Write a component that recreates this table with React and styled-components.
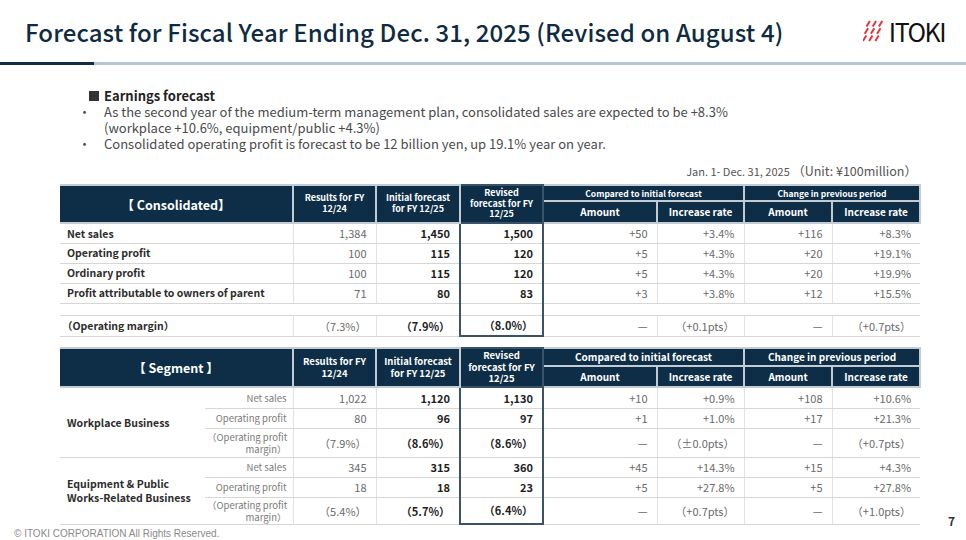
import React from 'react';
import styled, { createGlobalStyle, css } from 'styled-components';

const NAVY = '#0d2e46';
const BOX = '#3a5368';

const GlobalStyle = createGlobalStyle`
  body {
    margin: 0;
    background: #fff;
    font-family: "Noto Sans CJK JP", "Noto Sans", sans-serif;
  }
`;

const Slide = styled.div`
  width: 966px;
  height: 540px;
  overflow: hidden;
  display: flex;
  flex-direction: column;
  background: #fff;
`;

const Header = styled.header`
  height: 63px;
  box-sizing: border-box;
  display: flex;
  align-items: center;
  justify-content: space-between;
  padding: 0 21px 0 25px;
`;

const Title = styled.h1`
  margin: 0;
  font-size: 24px;
  font-weight: 500;
  color: #0f2b42;
  white-space: nowrap;
  letter-spacing: 0.1px;
`;

const Logo = styled.div`
  display: flex;
  align-items: center;
  gap: 4px;
`;

const LogoText = styled.span`
  font-size: 25px;
  font-weight: 400;
  color: #111;
  letter-spacing: -1.5px;
  line-height: 1;
`;

const Rule = styled.div`
  display: flex;
  height: 3px;
`;

const RuleSegment = styled.div`
  height: 100%;
  flex: ${p => (p.$width ? `0 0 ${p.$width}px` : '1')};
  background: ${p => (p.$dark ? NAVY : '#b5c4cf')};
`;

const Main = styled.main`
  padding-left: 60px;
  display: flex;
  flex-direction: column;
`;

const Summary = styled.section`
  margin-top: 23px;
  padding-left: 18px;
  font-size: 13px;
  line-height: 16px;
  color: #4a4a4a;
`;

const Heading = styled.div`
  display: flex;
  align-items: center;
  gap: 5px;
  padding-left: 11px;
  font-weight: 700;
  color: #222;
`;

const Square = styled.span`
  width: 10px;
  height: 10px;
  background: #333;
`;

const Bullet = styled.div`
  display: flex;
`;

const Marker = styled.span`
  flex: 0 0 26px;
`;

const TableArea = styled.div`
  width: 860px;
  display: flex;
  flex-direction: column;
`;

const Unit = styled.div`
  margin-top: 11px;
  height: 16px;
  line-height: 16px;
  text-align: right;
  padding-right: 3px;
  color: #555;
  font-size: 11px;

  & > span {
    font-size: 12.5px;
  }
`;

const Table = styled.table`
  width: 860px;
  border-collapse: collapse;
  table-layout: fixed;
  margin-top: ${p => p.$mt || 0}px;
  font-size: 11px;
`;

const revisedBox = css`
  border-left: 2px solid ${BOX};
  border-right: 2px solid ${BOX};
`;

const HeadRow = styled.tr`
  height: ${p => p.$h}px;
`;

const HeadCell = styled.th`
  background: ${NAVY};
  color: #fff;
  font-weight: 700;
  font-size: ${p => p.$size || 9}px;
  line-height: 1.2;
  padding: 0 2px;
  text-align: center;
  vertical-align: middle;
  border: 2px solid #c3ccd2;
  ${p => p.$revised && css`
    border: 2px solid ${BOX};
  `}
`;

const TitleHead = styled(HeadCell)`
  font-size: 12.5px;
  border-left: none;
`;

const Row = styled.tr`
  height: ${p => p.$h}px;
`;

const Cell = styled.td`
  padding: 0 9px 0 4px;
  border-bottom: 1px solid #d6d6d6;
  border-left: 1px solid #e2e2e2;
  text-align: right;
  vertical-align: middle;
  white-space: nowrap;
  color: ${p => (p.$strong ? '#1e1e1e' : '#6a6a6a')};
  font-weight: ${p => (p.$strong ? 700 : 400)};
  ${p => p.$revised && revisedBox}
  ${p => p.$last && p.$revised && css`
    border-bottom: 2px solid ${BOX};
  `}
`;

const LabelCell = styled.td`
  padding: 0 4px 0 ${p => (p.$tight ? 2 : 7)}px;
  border-bottom: 1px solid #d6d6d6;
  text-align: left;
  vertical-align: middle;
  font-weight: 700;
  font-size: 10.5px;
  color: #2c2c2c;
  line-height: 1.25;
`;

const SubLabelCell = styled.td`
  padding: 0 6px 0 2px;
  border-bottom: 1px solid #d6d6d6;
  text-align: right;
  vertical-align: middle;
  font-size: 9.5px;
  line-height: 12px;
  color: #7a7a7a;
  white-space: nowrap;
`;

const SpacerCell = styled.td`
  border-bottom: 1px solid #d6d6d6;
  ${p => p.$revised && revisedBox}
`;

const TableRow2 = styled.div`
  display: flex;
  align-items: flex-end;
`;

const PageNum = styled.span`
  margin: 0 0 -4px 27px;
  font-size: 12px;
  font-weight: 700;
  color: #333;
`;

const Footer = styled.footer`
  margin-top: 2px;
  padding-left: 14px;
  font-family: "Liberation Sans", Arial, sans-serif;
  font-size: 10px;
  line-height: 13px;
  color: #8a8a8a;
`;

const COLS1 = [233, 83, 84, 83, 114, 87, 88, 88];
const COLS2 = [145, 88, 83, 84, 83, 114, 87, 88, 88];

const consolidated = [
  ['Net sales', '1,384', '1,450', '1,500', '+50', '+3.4%', '+116', '+8.3%'],
  ['Operating profit', '100', '115', '120', '+5', '+4.3%', '+20', '+19.1%'],
  ['Ordinary profit', '100', '115', '120', '+5', '+4.3%', '+20', '+19.9%'],
  ['Profit attributable to owners of parent', '71', '80', '83', '+3', '+3.8%', '+12', '+15.5%'],
];

const margin1 = ['（Operating margin）', '（7.3%）', '（7.9%）', '（8.0%）', '—', '（+0.1pts）', '—', '（+0.7pts）'];

const marginLabel = <>（Operating profit<br />margin）</>;

const segments = [
  {
    name: 'Workplace Business',
    rows: [
      ['Net sales', '1,022', '1,120', '1,130', '+10', '+0.9%', '+108', '+10.6%'],
      ['Operating profit', '80', '96', '97', '+1', '+1.0%', '+17', '+21.3%'],
      [marginLabel, '（7.9%）', '（8.6%）', '（8.6%）', '—', '（±0.0pts）', '—', '（+0.7pts）'],
    ],
  },
  {
    name: <>Equipment &amp; Public<br />Works-Related Business</>,
    rows: [
      ['Net sales', '345', '315', '360', '+45', '+14.3%', '+15', '+4.3%'],
      ['Operating profit', '18', '18', '23', '+5', '+27.8%', '+5', '+27.8%'],
      [marginLabel, '（5.4%）', '（5.7%）', '（6.4%）', '—', '（+0.7pts）', '—', '（+1.0pts）'],
    ],
  },
];
const segHeights = [[21, 20, 29], [20, 20, 27]];

function LogoMark() {
  const dashes = [];
  for (let r = 0; r < 3; r++) {
    for (let c = 0; c < 3; c++) {
      const x = 3.5 + c * 6.2 - r * 1.8;
      const y = 1 + r * 7.2;
      dashes.push(<line key={`${r}-${c}`} x1={x} y1={y + 5.6} x2={x + 3.4} y2={y} />);
    }
  }
  return (
    <svg width="22" height="23" viewBox="0 0 22 23">
      <g stroke="#e3333d" strokeWidth="2">{dashes}</g>
    </svg>
  );
}

function Values({ values, last }) {
  return values.map((v, i) => (
    <Cell key={i} $strong={i === 1 || i === 2} $revised={i === 2} $last={last}>{v}</Cell>
  ));
}

function HeadGroup({ title, sizes, titleSpan, heights }) {
  return (
    <>
      <HeadRow $h={heights[0]}>
        <TitleHead rowSpan={2} colSpan={titleSpan}>{title}</TitleHead>
        <HeadCell rowSpan={2} $size={sizes.col}>Results for FY<br />12/24</HeadCell>
        <HeadCell rowSpan={2} $size={sizes.col}>Initial forecast<br />for FY 12/25</HeadCell>
        <HeadCell rowSpan={2} $size={sizes.col} $revised>Revised<br />forecast for FY<br />12/25</HeadCell>
        <HeadCell colSpan={2} $size={sizes.group}>Compared to initial forecast</HeadCell>
        <HeadCell colSpan={2} $size={sizes.group}>Change in previous period</HeadCell>
      </HeadRow>
      <HeadRow $h={heights[1]}>
        <HeadCell $size={10}>Amount</HeadCell>
        <HeadCell $size={10}>Increase rate</HeadCell>
        <HeadCell $size={10}>Amount</HeadCell>
        <HeadCell $size={10}>Increase rate</HeadCell>
      </HeadRow>
    </>
  );
}

function ConsolidatedTable() {
  return (
    <Table $mt={5}>
      <colgroup>
        {COLS1.map((w, i) => <col key={i} style={{ width: w }} />)}
      </colgroup>
      <thead>
        <HeadGroup title="【 Consolidated】" titleSpan={1} heights={[16, 22]} sizes={{ col: 9, group: 8.5 }} />
      </thead>
      <tbody>
        {consolidated.map(([label, ...vals]) => (
          <Row key={label} $h={20}>
            <LabelCell>{label}</LabelCell>
            <Values values={vals} />
          </Row>
        ))}
        <Row $h={12}>
          <SpacerCell colSpan={3} />
          <SpacerCell $revised />
          <SpacerCell colSpan={4} />
        </Row>
        <Row $h={21}>
          <LabelCell $tight>{margin1[0]}</LabelCell>
          <Values values={margin1.slice(1)} last />
        </Row>
      </tbody>
    </Table>
  );
}

function SegmentTable() {
  return (
    <Table $mt={10}>
      <colgroup>
        {COLS2.map((w, i) => <col key={i} style={{ width: w }} />)}
      </colgroup>
      <thead>
        <HeadGroup title="【 Segment 】" titleSpan={2} heights={[18, 21]} sizes={{ col: 9.5, group: 10 }} />
      </thead>
      <tbody>
        {segments.map((seg, s) =>
          seg.rows.map(([label, ...vals], r) => (
            <Row key={`${s}-${r}`} $h={segHeights[s][r]}>
              {r === 0 && <LabelCell rowSpan={3}>{seg.name}</LabelCell>}
              <SubLabelCell>{label}</SubLabelCell>
              <Values values={vals} last={s === 1 && r === 2} />
            </Row>
          ))
        )}
      </tbody>
    </Table>
  );
}

export default function App() {
  return (
    <Slide>
      <GlobalStyle />
      <Header>
        <Title>Forecast for Fiscal Year Ending Dec. 31, 2025 (Revised on August 4)</Title>
        <Logo>
          <LogoMark />
          <LogoText>ITOKI</LogoText>
        </Logo>
      </Header>
      <Rule>
        <RuleSegment $dark $width={94} />
        <RuleSegment />
      </Rule>
      <Main>
        <Summary>
          <Heading><Square />Earnings forecast</Heading>
          <Bullet>
            <Marker>・</Marker>
            <span>
              As the second year of the medium-term management plan, consolidated sales are expected to be +8.3%
              <br />(workplace +10.6%, equipment/public +4.3%)
            </span>
          </Bullet>
          <Bullet>
            <Marker>・</Marker>
            <span>Consolidated operating profit is forecast to be 12 billion yen, up 19.1% year on year.</span>
          </Bullet>
        </Summary>
        <TableArea>
          <Unit>Jan. 1- Dec. 31, 2025 <span>（Unit: ¥100million）</span></Unit>
          <ConsolidatedTable />
          <TableRow2>
            <SegmentTable />
            <PageNum>7</PageNum>
          </TableRow2>
        </TableArea>
      </Main>
      <Footer>© ITOKI CORPORATION All Rights Reserved.</Footer>
    </Slide>
  );
}
